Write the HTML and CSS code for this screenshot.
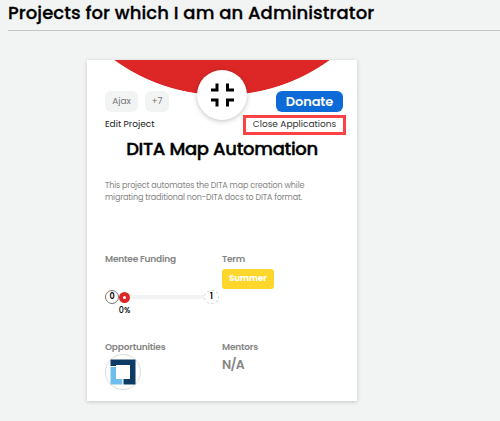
FILE: index.html
```html
<!DOCTYPE html>
<html lang="en">
<head>
<meta charset="utf-8">
<title>Projects</title>
<link rel="stylesheet" href="styles.css">
</head>
<body>
<h1 class="page-title"><span>Projects for which I am an Administrator</span></h1>
<article class="card">
  <div class="arc"></div>
  <div class="logo">
    <svg width="24" height="24" viewBox="0 0 24 24" fill="none" stroke="#000" stroke-width="3"><path d="M1 7H7V.5M17.5 .5V7H24M1 17H7V23.5M17.5 23.5V17H24"/></svg>
  </div>
  <div class="top">
    <span class="tag tag-name">Ajax</span><span class="tag tag-more">+7</span>
    <a class="donate"><span>Donate</span></a>
  </div>
  <div class="links">
    <a class="edit">Edit Project</a>
    <a class="close"><span>Close Applications</span></a>
  </div>
  <h2 class="name"><span>DITA Map Automation</span></h2>
  <p class="desc"><span class="d1">This project automates the DITA map creation while</span><br><span class="d2">migrating traditional non-DITA docs to DITA format.</span></p>
  <div class="info">
    <section>
      <h3 class="funding-label"><span>Mentee Funding</span></h3>
      <div class="slider">
        <span class="end start">0</span><span class="thumb"></span><span class="track"></span><span class="end goal">1</span>
      </div>
      <div class="percent">0%</div>
    </section>
    <section>
      <h3 class="term-label"><span>Term</span></h3>
      <div class="term"><span>Summer</span></div>
    </section>
    <section>
      <h3 class="opp-label"><span>Opportunities</span></h3>
      <div class="avatar">
        <svg width="26" height="26" viewBox="0 0 26 26"><path fill="#0d3b66" d="M.5 .5H25.5V25.5H13.5V20H20V6H6V7H.5z"/><path fill="#6fbdec" d="M.5 8H6V20H12.3V25.5H.5z"/></svg>
      </div>
    </section>
    <section>
      <h3 class="mentor-label"><span>Mentors</span></h3>
      <div class="none"><span>N/A</span></div>
    </section>
  </div>
</article>
</body>
</html>
```
FILE: styles.css
```css
* { box-sizing: border-box; }
body {
  margin: 0;
  height: 421px;
  overflow: hidden;
  background: #f2f4f4;
  font-family: Poppins, Inter, sans-serif;
  color: #000;
  white-space: nowrap;
}
h1, h2, h3, p { margin: 0; }
.page-title {
  height: 31px;
  margin-left: 8px;
  border-bottom: 1px solid #c4c7c7;
  font-size: 18px;
  font-weight: 500;
  line-height: 26px;
  letter-spacing: .08px;
  -webkit-text-stroke: .3px #000;
}
.card {
  position: relative;
  width: 270px;
  height: 341px;
  margin: 29px 0 0 87px;
  padding: 31px 14px 0 18px;
  background: #fff;
  box-shadow: 0 1px 4px rgba(0, 0, 0, .2);
}
.arc {
  position: absolute;
  inset: 0;
  background: radial-gradient(circle at 135px -148px, #dd2727 182.6px, transparent 183.4px);
}
.logo {
  position: absolute;
  left: 110px;
  top: 10px;
  width: 50px;
  height: 50px;
  display: grid;
  place-items: center;
  border-radius: 50%;
  background: #fff;
  box-shadow: 0 1px 5px rgba(0, 0, 0, .25);
}
.top, .links { position: relative; display: flex; }
.top { height: 21px; gap: 7px; }
.tag {
  height: 21px;
  border-radius: 6px;
  background: #f2f4f4;
  color: #777;
  font-size: 9px;
  line-height: 20px;
  text-align: center;
}
.tag-name { width: 33px; }
.tag-more { width: 24px; }
.donate {
  width: 67px;
  margin-left: auto;
  border-radius: 6px;
  background: #0d6bd7;
  color: #fff;
  font-size: 13px;
  font-weight: 600;
  line-height: 21px;
  text-align: center;
  letter-spacing: -.1px;
}
.links { height: 20px; margin: 3px -3px 0 0; justify-content: space-between; font-size: 9px; }
.edit { line-height: 18px; color: #222; }
.close {
  width: 103px;
  border: 3px solid #fb4245;
  color: #333;
  line-height: 12px;
  text-align: center;
}
.name {
  margin: 2px 0 0 -4px;
  height: 24px;
  font-size: 18px;
  font-weight: 500;
  line-height: 24px;
  text-align: center;
  letter-spacing: -.32px;
  -webkit-text-stroke: .4px #000;
}
.desc {
  height: 92px;
  padding-top: 19px;
  color: #858585;
  font-size: 8px;
  line-height: 12px;
  letter-spacing: -.14px;
}
.info { display: grid; grid-template-columns: 117px 1fr; grid-template-rows: 88px 60px; }
h3 { height: 12px; color: #858585; font-size: 9px; font-weight: 600; line-height: 12px; letter-spacing: -.2px; }
.slider { display: flex; align-items: center; width: 114px; height: 14px; margin-top: 25px; }
.end {
  width: 14px;
  height: 14px;
  border: 1px solid #777;
  border-radius: 50%;
  font-size: 8px;
  font-weight: 600;
  line-height: 12px;
  text-align: center;
}
.goal { width: 15px; border: 1px dashed #d5d5d5; }
.thumb { width: 11px; height: 11px; border: 4px solid #dd2727; border-radius: 50%; background: #fff; }
.track { flex: 1; height: 4px; background: #f2f4f4; }
.percent { width: 39px; margin-top: 1px; font-size: 8px; font-weight: 500; line-height: 12px; text-align: center; }
.term {
  width: 52px;
  height: 20px;
  margin-top: 4px;
  border-radius: 3px;
  background: #ffd62b;
  color: #fff;
  font-size: 8.5px;
  font-weight: 700;
  line-height: 18px;
  text-align: center;
}
.avatar {
  display: grid;
  place-items: center;
  width: 36px;
  height: 36px;
  margin-top: 1px;
  border: 1px solid #d9dcde;
  border-radius: 50%;
}
.none { margin-top: 4px; color: #858585; font-size: 12.5px; font-weight: 600; line-height: 16px; letter-spacing: -.8px; }
```
